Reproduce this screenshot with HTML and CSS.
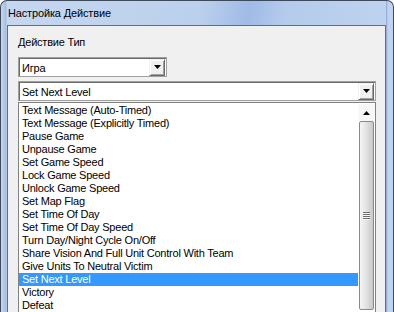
FILE: index.html
```html
<!DOCTYPE html>
<html lang="ru">
  <head>
    <meta charset="UTF-8" />
    <title>Настройка Действие</title>
    <link rel="stylesheet" href="styles.css">
  </head>
  <body>
    <div class="window">
      <div class="titlebar">Настройка Действие</div>
      <div class="client">
        <div class="label">Действие Тип</div>
        <div class="combo combo-short">
          <span class="combo-text">Игра</span>
          <span class="drop-btn"><svg width="7" height="4" viewBox="0 0 7 4"><path d="M0 0h7L3.5 4z" fill="#000"/></svg></span>
        </div>
        <div class="combo combo-wide">
          <span class="combo-text">Set Next Level</span>
          <span class="drop-btn"><svg width="7" height="4" viewBox="0 0 7 4"><path d="M0 0h7L3.5 4z" fill="#000"/></svg></span>
        </div>
        <div class="listbox">
          <ul class="items">
            <li>Text Message (Auto-Timed)</li>
            <li>Text Message (Explicitly Timed)</li>
            <li>Pause Game</li>
            <li>Unpause Game</li>
            <li>Set Game Speed</li>
            <li>Lock Game Speed</li>
            <li>Unlock Game Speed</li>
            <li>Set Map Flag</li>
            <li>Set Time Of Day</li>
            <li>Set Time Of Day Speed</li>
            <li>Turn Day/Night Cycle On/Off</li>
            <li>Share Vision And Full Unit Control With Team</li>
            <li>Give Units To Neutral Victim</li>
            <li class="selected">Set Next Level</li>
            <li>Victory</li>
            <li>Defeat</li>
          </ul>
          <div class="scrollbar">
            <div class="sb-arrow"><svg width="7" height="4" viewBox="0 0 7 4"><path d="M3.5 0L7 4H0z" fill="#000"/></svg></div>
            <div class="sb-thumb">
              <div class="grip"></div>
            </div>
          </div>
        </div>
      </div>
    </div>
  </body>
</html>
```

FILE: styles.css
```css
body {
  margin: 0;
  width: 394px;
  height: 312px;
  overflow: hidden;
  background: #fff;
  font-family: "Liberation Sans", Arial, sans-serif;
}
.window {
  box-sizing: border-box;
  width: 394px;
  height: 312px;
  overflow: hidden;
  border: 1px solid #3d4a5c;
  border-bottom: none;
  border-radius: 7px 7px 0 0;
  padding: 0 7px 0 6px;
  background:
    linear-gradient(to right, #c7d8ef 0, #a5bbe2 5px, transparent 6px),
    linear-gradient(to left, #c0d3ef 0, #c0d3ef 5px, #8aa2d6 7px, transparent 7px),
    linear-gradient(100deg, #c6d7ef 0%, #bbd0ed 45%, #9fbbe6 56%, #b4cbec 64%, #c4d7f0 100%);
}
.titlebar {
  height: 24px;
  padding-left: 1px;
  font-size: 11px;
  letter-spacing: -0.15px;
  line-height: 25px;
  color: #000;
}
.client {
  box-sizing: border-box;
  height: 300px;
  border: 1px solid #5d6e87;
  border-bottom: none;
  background: #f0f0f0;
  padding: 10px 9px 0 10px;
  font-size: 11px;
  letter-spacing: -0.22px;
}
.label {
  height: 13px;
  line-height: 13px;
  margin-bottom: 8px;
}
.combo {
  box-sizing: border-box;
  height: 20px;
  display: flex;
  align-items: center;
  background: #fff;
  border: 1px solid #a0a0a0;
  box-shadow: inset 1px 1px 0 #6b6b6b;
  padding: 1px 1px 0 2px;
}
.combo-short {
  width: 149px;
  margin-bottom: 4px;
}
.combo-wide {
  width: 358px;
  margin-bottom: 1px;
}
.combo-text {
  flex: 1;
  padding-left: 1px;
  line-height: 16px;
}
.drop-btn {
  box-sizing: border-box;
  width: 16px;
  height: 17px;
  margin-bottom: 1px;
  display: flex;
  align-items: center;
  justify-content: center;
  background: #f0f0f0;
  border: 1px solid;
  border-color: #f0f0f0 #696969 #696969 #f0f0f0;
  box-shadow: inset 1px 1px 0 #fff, inset -1px -1px 0 #a0a0a0;
}
.listbox {
  box-sizing: border-box;
  width: 358px;
  height: 230px;
  display: flex;
  background: #fff;
  border: 1px solid #828282;
  padding: 1px 0 0 0;
}
.items {
  flex: 1;
  list-style: none;
  margin: 0;
  padding: 0;
}
.items li {
  height: 13px;
  line-height: 13px;
  padding-left: 3px;
  white-space: nowrap;
  color: #000;
}
.items li.selected {
  background: #3399ff;
  color: #fff;
}
.scrollbar {
  width: 17px;
  display: flex;
  flex-direction: column;
  background: #fff;
}
.sb-arrow {
  height: 17px;
  display: flex;
  align-items: center;
  justify-content: center;
  background: #f7f7f7;
}
.sb-thumb {
  box-sizing: border-box;
  width: 15px;
  height: 189px;
  margin-left: 1px;
  display: flex;
  align-items: center;
  justify-content: center;
  border: 1px solid #8a8a8a;
  border-radius: 2px;
  background: linear-gradient(to right, #f5f5f5, #e4e4e4 45%, #c8c8c8);
}
.grip {
  width: 7px;
  height: 8px;
  background: repeating-linear-gradient(to bottom, #6e6e6e 0, #6e6e6e 1px, #f8f8f8 1px, #f8f8f8 2px);
}
```
